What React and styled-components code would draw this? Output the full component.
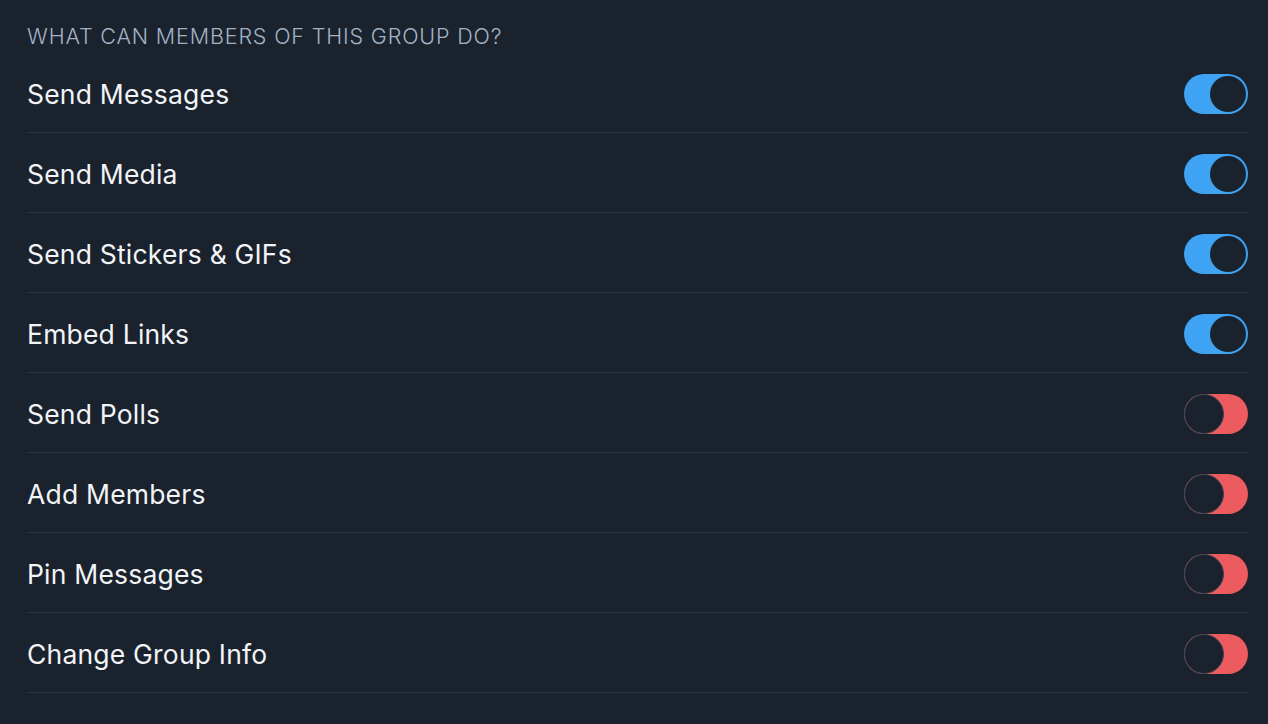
import { createGlobalStyle, styled } from "styled-components";

const GlobalStyle = createGlobalStyle`
    html, body {
        margin: 0;
        background: #1a222d;
    }
    body {
        font-family: Inter, "Noto Sans", sans-serif;
        -webkit-font-smoothing: antialiased;
    }
`;

const Page = styled.div`
    background: #1a222d;
    min-height: 724px;
    padding: 21px 20px 0 27px;
    box-sizing: border-box;
`;

const Header = styled.div`
    color: #a3b3c5;
    font-size: 21.5px;
    font-weight: 300;
    letter-spacing: 0.85px;
    line-height: 30px;
    margin-bottom: 2px;
`;

const Row = styled.div`
    display: flex;
    align-items: center;
    justify-content: space-between;
    height: 79px;
    border-bottom: 1.5px solid #2a3545;
`;

const Label = styled.span`
    color: #f2f4f7;
    font-size: 26.5px;
    letter-spacing: 0.2px;
    margin-top: 2px;
`;

const Track = styled.div`
    position: relative;
    width: 64px;
    height: 40px;
    border-radius: 20px;
    background: ${p => (p.on ? "#3ea3f3" : "#ec5b5f")};
    margin-top: 2px;
`;

const Knob = styled.div`
    position: absolute;
    top: ${p => (p.on ? "2px" : "0")};
    left: ${p => (p.on ? "26px" : "0")};
    width: ${p => (p.on ? "36px" : "40px")};
    height: ${p => (p.on ? "36px" : "40px")};
    border-radius: 50%;
    background: #1a222d;
    box-sizing: border-box;
    border: ${p => (p.on ? "none" : "1px solid #3b4554")};
`;

const items = [
    ["Send Messages", true],
    ["Send Media", true],
    ["Send Stickers & GIFs", true],
    ["Embed Links", true],
    ["Send Polls", false],
    ["Add Members", false],
    ["Pin Messages", false],
    ["Change Group Info", false],
];

function Toggle({ on }) {
    return (
        <Track on={on ? 1 : 0}>
            <Knob on={on ? 1 : 0} />
        </Track>
    );
}

export default function App() {
    return (
        <Page>
            <GlobalStyle />
            <Header>WHAT CAN MEMBERS OF THIS GROUP DO?</Header>
            {items.map(([label, on]) => (
                <Row key={label}>
                    <Label>{label}</Label>
                    <Toggle on={on} />
                </Row>
            ))}
        </Page>
    );
}
